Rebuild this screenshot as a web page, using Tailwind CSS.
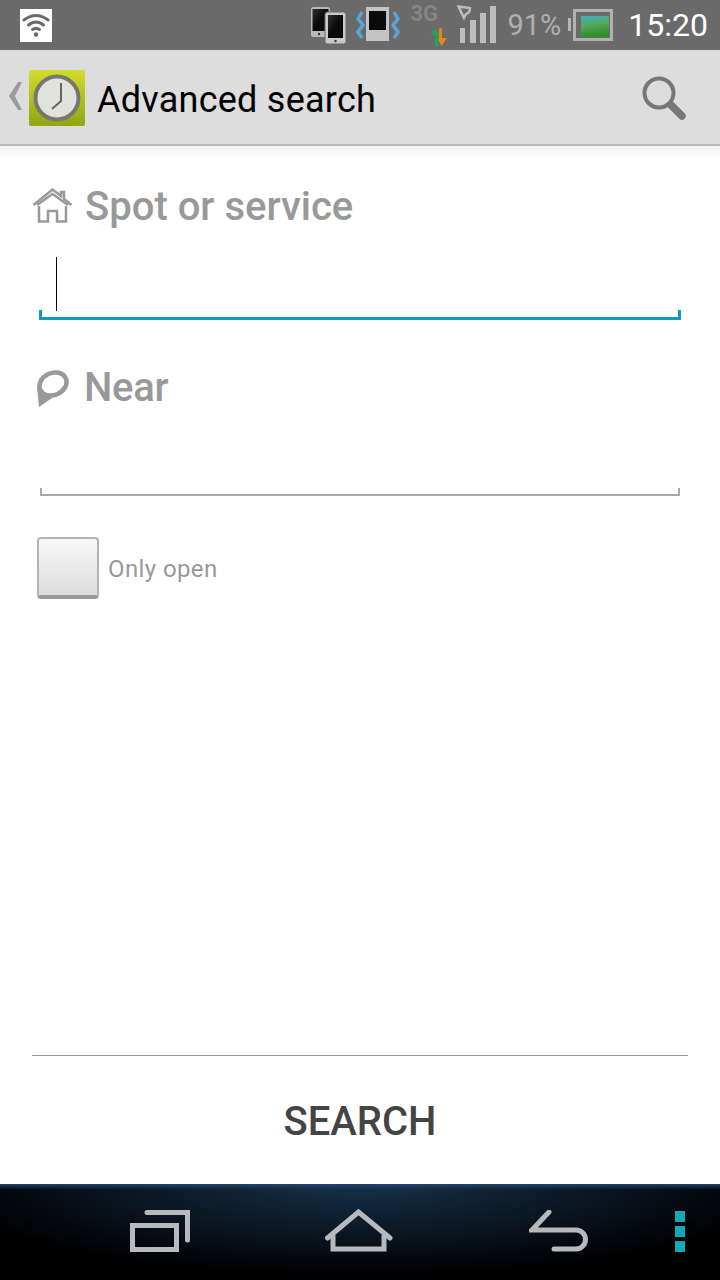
<!DOCTYPE html>
<html lang="en">
<head>
    <meta charset="UTF-8">
    <title>Advanced search</title>
    <script src="https://cdn.jsdelivr.net/npm/@tailwindcss/browser@4"></script>
</head>
<body class="bg-white">
    <div class="w-[720px] h-[1280px] flex flex-col overflow-hidden font-['Roboto',sans-serif]">
        <!-- status bar -->
        <div class="h-[50px] shrink-0 bg-[#6a6a6a] flex items-center relative">
            <div class="ml-[20px] w-[32px] h-[33px] bg-white flex items-center justify-center">
                <svg width="28" height="26" viewBox="0 0 28 26" fill="none" stroke="#6b6b6b" stroke-width="3" stroke-linecap="round">
                    <path d="M2 8Q14 -1 26 8"/><path d="M6.500 13Q14 7 21.500 13"/><path d="M10.500 17.500Q14 15 17.500 17.500"/>
                    <circle cx="14" cy="22.500" r="2.200" fill="#6b6b6b" stroke="none"/>
                </svg>
            </div>
            <div class="ml-auto flex items-center h-full">
                <svg width="36" height="37" viewBox="0 0 36 37" class="mr-[10px] mt-[1px]">
                    <defs>
                        <linearGradient id="scr" x1="0" y1="0" x2="1" y2="1">
                            <stop offset="0" stop-color="#333"/><stop offset="0.5" stop-color="#0a0a0a"/>
                        </linearGradient>
                    </defs>
                    <rect x="1" y="0" width="19" height="30" rx="2.500" fill="#b9b9b9"/>
                    <rect x="2.500" y="2" width="16" height="22" fill="url(#scr)"/>
                    <circle cx="9" cy="27" r="1.200" fill="#333"/>
                    <rect x="15" y="5" width="21" height="32" rx="2.500" fill="#c8c8c8" stroke="#6a6a6a"/>
                    <rect x="18" y="8" width="15" height="23" fill="url(#scr)"/>
                    <circle cx="25.500" cy="34" r="1.200" fill="#333"/>
                </svg>
                <svg width="44" height="36" viewBox="0 0 44 36" class="mr-[10px]">
                    <path d="M6 5L2 12L7 18L2 25L6 31" fill="none" stroke="#58a6d6" stroke-width="3.500"/>
                    <path d="M38 5L42 12L37 18L42 25L38 31" fill="none" stroke="#58a6d6" stroke-width="3.500"/>
                    <rect x="10" y="0" width="23" height="34" fill="#c4c4c4"/>
                    <rect x="13" y="4" width="17" height="19" fill="#0b0b0b"/>
                </svg>
                <div class="relative w-[37px] h-[44px] mr-[10px]">
                    <span class="absolute left-0 top-[-1px] text-[22px] leading-[24px] font-bold text-[#858585]">3G</span>
                    <svg width="16" height="18" viewBox="0 0 16 18" class="absolute right-0 bottom-[1px]">
                        <path d="M4 18V7H0L4.500 0L8.500 6H8V18Z" fill="#27a05a"/>
                        <path d="M8 0H11V10H16L10.500 18L7 11H8Z" fill="#f07f1e"/>
                    </svg>
                </div>
                <svg width="40" height="38" viewBox="0 0 40 38" class="mr-[10px] mb-[2px]">
                    <path d="M1.500 1.500L13 3Q13 8 9 9L7 13Z" fill="none" stroke="#bdbdbd" stroke-width="2.500"/>
                    <rect x="3" y="23" width="5" height="15" fill="#bdbdbd"/>
                    <rect x="13" y="15" width="6" height="23" fill="#bdbdbd"/>
                    <rect x="23" y="8" width="6" height="30" fill="#bdbdbd"/>
                    <rect x="33" y="1" width="6" height="37" fill="#bdbdbd"/>
                </svg>
                <span class="text-[29px] leading-none text-[#b0b0b0] mr-[7px]">91%</span>
                <svg width="46" height="32" viewBox="0 0 46 32" class="mr-[14px]">
                    <defs>
                        <linearGradient id="batt" x1="0" y1="0" x2="0.200" y2="1">
                            <stop offset="0" stop-color="#3fb4c4"/><stop offset="0.45" stop-color="#58a85e"/><stop offset="1" stop-color="#2f8f2c"/>
                        </linearGradient>
                    </defs>
                    <rect x="0" y="9" width="3" height="13" fill="#b5b5b5"/>
                    <rect x="6.500" y="1.500" width="37" height="29" fill="none" stroke="#b0b0b0" stroke-width="3"/>
                    <rect x="13" y="7" width="28" height="21" fill="url(#batt)"/>
                </svg>
                <span class="text-[32px] leading-none text-white mr-[12px]">15:20</span>
            </div>
        </div>

        <!-- action bar -->
        <div class="h-[96px] shrink-0 bg-[#dddddd] border-b-2 border-[#b8b8b8] flex items-center">
            <svg width="14" height="28" viewBox="0 0 14 28" class="ml-[9px] mr-[6px] mt-[-3px]">
                <path d="M13 0H9L0 14L9 28H13L6 14Z" fill="#9b9b9b"/>
            </svg>
            <div class="w-[56px] h-[56px] mt-[2px] rounded-[2px] bg-gradient-to-b from-[#d3dc2c] to-[#90a510] flex items-center justify-center">
                <svg width="50" height="50" viewBox="0 0 50 50">
                    <circle cx="25" cy="25" r="21.500" fill="#e2e2dd" stroke="#77776f" stroke-width="4"/>
                    <path d="M29 10V28L20 36" fill="none" stroke="#66665f" stroke-width="2"/>
                </svg>
            </div>
            <span class="ml-[12px] mt-[6px] text-[36px] leading-none text-black tracking-[0.25px]">Advanced search</span>
            <svg width="44" height="44" viewBox="0 0 44 44" class="ml-auto mr-[34px] mt-[2px]">
                <circle cx="17" cy="17" r="14.500" fill="none" stroke="#777777" stroke-width="4"/>
                <path d="M29 29L40 40" stroke="#777777" stroke-width="7.500" stroke-linecap="round"/>
            </svg>
        </div>
        <div class="h-[14px] shrink-0 bg-gradient-to-b from-[#f1f1f1] to-white"></div>

        <!-- form -->
        <div class="flex-1 flex flex-col">
            <div class="flex items-center h-[44px] mt-[25px] ml-[32px]">
                <svg width="41" height="36" viewBox="0 0 41 36" fill="none" stroke="#999999" stroke-width="2.500" class="mr-[12px] mt-[-3px]">
                    <path d="M1.500 17L20.500 1.500L29 8V4H32V11L39.500 17"/>
                    <path d="M7 18V33.500H16V23H25V33.500H34V18"/>
                    <path d="M5 17L20.500 6L36 17"/>
                </svg>
                <span class="text-[40px] leading-none font-medium text-[#999999]">Spot or service</span>
            </div>
            <div class="relative h-[72px] mt-[19px] mx-[39px]">
                <div class="h-full border-b-[3px] border-x-[3px] border-[#0f9bc0] [clip-path:polygon(0_62px,3px_62px,3px_69px,639px_69px,639px_62px,642px_62px,642px_72px,0_72px)]"></div>
                <div class="absolute left-[17px] top-[9px] w-px h-[54px] bg-black"></div>
            </div>
            <div class="flex items-center h-[44px] mt-[46px] ml-[36px]">
                <svg width="33" height="38" viewBox="0 0 33 38" class="mr-[15px]">
                    <path d="M1 18L3 38L16 29Z" fill="#999999"/>
                    <ellipse cx="17" cy="15" rx="14" ry="11" transform="rotate(-25 17 15)" fill="#ffffff" stroke="#999999" stroke-width="4.500"/>
                </svg>
                <span class="text-[40px] leading-none font-medium text-[#999999] tracking-[-0.3px]">Near</span>
            </div>
            <div class="h-[12px] mt-[74px] mx-[40px] border-b-2 border-x-2 border-[#aaaaaa] [clip-path:polygon(0_4px,2px_4px,2px_10px,638px_10px,638px_4px,640px_4px,640px_12px,0_12px)]"></div>
            <div class="flex items-center mt-[41px] ml-[37px]">
                <div class="w-[62px] h-[62px] rounded-[4px] border-2 border-b-[4px] border-[#b4b4b4] border-b-[#999999] bg-gradient-to-b from-[#f8f8f8] to-[#dcdcdc]"></div>
                <span class="ml-[9px] mt-[2px] text-[24px] leading-none text-[#999999] tracking-[0.4px]">Only open</span>
            </div>
        </div>

        <!-- search button -->
        <div class="mx-[32px] h-[129px] shrink-0 border-t border-[#9a9a9a] flex items-center justify-center">
            <span class="mt-[4px] text-[40px] leading-none font-medium text-[#444444]">SEARCH</span>
        </div>

        <!-- nav bar -->
        <div class="h-[96px] shrink-0 relative flex items-center bg-black bg-[radial-gradient(ellipse_420px_90px_at_50%_0,#16314a,#050a10_80%,#000)]">
            <div class="absolute inset-x-0 top-0 h-[6px] bg-gradient-to-b from-[#1f4468] to-transparent"></div>
            <svg width="62" height="42" viewBox="0 0 62 42" fill="none" stroke="#b7babd" class="ml-[129px] mt-[-2px]">
                <rect x="3.500" y="15.500" width="44" height="24" stroke-width="5"/>
                <path d="M18 2.500H58.500V30" stroke-width="5" stroke-linecap="round"/>
            </svg>
            <svg width="68" height="44" viewBox="0 0 68 44" fill="none" stroke="#b7babd" stroke-width="5" class="ml-[134px] mt-[-2px]">
                <path d="M2.500 29L33.500 3L65 29" stroke-linecap="round"/>
                <path d="M8 26V40H59V26"/>
            </svg>
            <svg width="60" height="42" viewBox="0 0 60 42" fill="none" stroke="#b7babd" stroke-width="5" stroke-linecap="round" class="ml-[136px] mt-[-2px]">
                <path d="M20 2L3 20H47A9.500 9.500 0 0 1 47 39H25"/>
            </svg>
            <div class="ml-auto mr-[35px] flex flex-col gap-[4px] mt-[-2px]">
                <div class="w-[10px] h-[11px] bg-[#10aab8]"></div>
                <div class="w-[10px] h-[11px] bg-[#10aab8]"></div>
                <div class="w-[10px] h-[11px] bg-[#10aab8]"></div>
            </div>
        </div>
    </div>
</body>
</html>
